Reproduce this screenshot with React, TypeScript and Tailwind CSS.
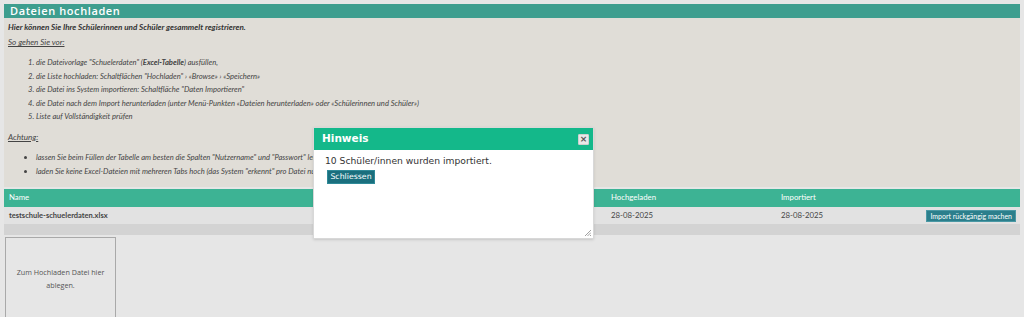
import React from 'react';

const Hinweis = () => (
  <div className="absolute left-[313px] top-[127px] w-[281px] h-[112px] bg-white border border-[#d8d8d8] shadow-sm flex flex-col font-['DejaVu_Sans',sans-serif]">
    <div className="h-[22px] bg-[#14b88a] flex items-center justify-between pl-[8px] pr-[4px]">
      <span className="text-white font-bold text-[10.5px]">Hinweis</span>
      <button className="w-[11px] h-[11px] bg-[#e8e8e8] border border-[#cfcfcf] rounded-[1px] flex items-center justify-center text-[#555] text-[9px] leading-none font-bold">
        ×
      </button>
    </div>
    <div className="flex-1 relative px-[11px] pt-[5px]">
      <p className="text-[9.2px] leading-[12px] text-[#333]">10 Schüler/innen wurden importiert.</p>
      <button className="block mt-[3px] ml-[2px] bg-[#1a6f7e] text-white text-[7.8px] w-[48px] h-[14px] leading-[12px] border border-[#2f8a98]">
        Schliessen
      </button>
      {/* Resize grip */}
      <svg className="absolute right-[2px] bottom-[2px]" width="7" height="7" viewBox="0 0 7 7">
        <path d="M7 1 L1 7 M7 3.5 L3.5 7 M7 6 L6 7" stroke="#888" strokeWidth="0.8" />
      </svg>
    </div>
  </div>
);

export default function App() {
  return (
    <div className="relative w-[1024px] h-[317px] overflow-hidden bg-[#e6e6e6] pt-[4px] px-[4px] font-['Lato',sans-serif] text-[#444]">
      {/* Titel */}
      <div className="h-[14px] bg-[#3e9e8f] flex items-center pl-[6px]">
        <h1 className="text-white text-[11px] font-semibold tracking-[0.6px] font-['Open_Sans',sans-serif]">
          Dateien hochladen
        </h1>
      </div>

      {/* Anleitung */}
      <div className="bg-[#e0ddd7] h-[169px] pl-[4px] pt-[3px] italic text-[8.1px]">
        <p className="font-bold text-[#333] leading-[12px]">
          Hier können Sie Ihre Schülerinnen und Schüler gesammelt registrieren.
        </p>
        <p className="underline leading-[12px] mt-[3px]">So gehen Sie vor:</p>
        <ol className="list-decimal pl-[28px] mt-[8px] leading-[13.5px] text-[7.6px]">
          <li>die Dateivorlage "Schuelerdaten" (<b>Excel-Tabelle</b>) ausfüllen,</li>
          <li>die Liste hochladen: Schaltflächen "Hochladen" › «Browse» › «Speichern»</li>
          <li>die Datei ins System importieren: Schaltfläche "Daten Importieren"</li>
          <li>die Datei nach dem Import herunterladen (unter Menü-Punkten «Dateien herunterladen» oder «Schülerinnen und Schüler»)</li>
          <li>Liste auf Vollständigkeit prüfen</li>
        </ol>
        <p className="underline leading-[12px] mt-[7px]">Achtung:</p>
        <ul className="list-disc pl-[28px] mt-[7px] leading-[14px] text-[7.6px]">
          <li>lassen Sie beim Füllen der Tabelle am besten die Spalten "Nutzername" und "Passwort" leer</li>
          <li>laden Sie keine Excel-Dateien mit mehreren Tabs hoch (das System "erkennt" pro Datei nur ein Tab)</li>
        </ul>
      </div>

      {/* Tabelle */}
      <div className="mt-[2px] text-[7.8px]">
        <div className="h-[18px] bg-[#3db394] text-white grid grid-cols-[602px_170px_1fr] items-center pl-[5px]">
          <span>Name</span>
          <span>Hochgeladen</span>
          <span>Importiert</span>
        </div>
        <div className="h-[17px] bg-[#e2e2e2] grid grid-cols-[602px_170px_1fr_auto] items-center pl-[5px] pr-[4px] text-[#444]">
          <span className="font-bold text-[7.5px]">testschule-schuelerdaten.xlsx</span>
          <span>28-08-2025</span>
          <span>28-08-2025</span>
          <button className="bg-[#2b7f8c] text-white text-[7px] h-[12px] px-[3px] leading-[10px] border border-[#4a98a4]">
            Import rückgängig machen
          </button>
        </div>
        <div className="h-[11px] bg-[#d3d3d3]" />
      </div>

      {/* Drop-Zone */}
      <div className="mt-[2px] ml-[1px] w-[111px] h-[90px] border border-[#a9a9a9] flex items-start justify-center pt-[28px] px-[8px]">
        <p className="text-center text-[7.2px] leading-[13px] text-[#555] font-['Open_Sans',sans-serif]">
          Zum Hochladen Datei hier ablegen.
        </p>
      </div>

      <Hinweis />
    </div>
  );
}
